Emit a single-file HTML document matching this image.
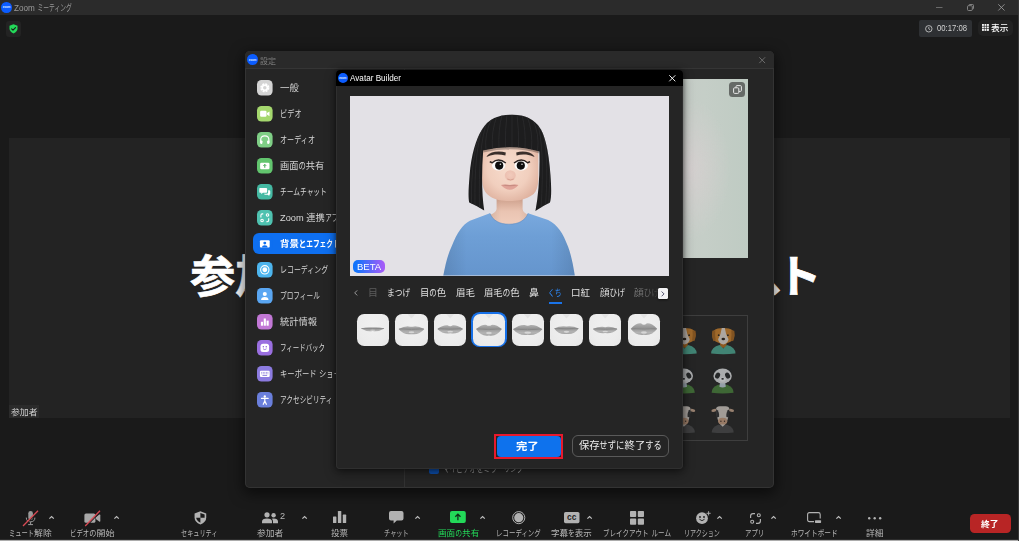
<!DOCTYPE html>
<html lang="ja">
<head>
<meta charset="utf-8">
<title>Zoom ミーティング</title>
<style>
html,body{margin:0;padding:0;}
body{width:1024px;height:541px;overflow:hidden;background:#1a1a1a;position:relative;font-family:"Liberation Sans","Noto Sans CJK JP",sans-serif;}
.abs,.t,svg{position:absolute;}
.t{white-space:pre;transform-origin:0 50%;display:block;}
.k{display:inline-block;vertical-align:baseline;white-space:pre;}
.k>span{display:inline-block;transform-origin:0 50%;white-space:pre;}
.k.h>span{transform:scaleX(0.8);}
.k.c>span{transform:scaleX(0.71);}
.layer{position:absolute;left:0;top:0;width:1024px;height:541px;}
svg{overflow:visible;}
</style>
</head>
<body>
<div class="layer" id="main">
<div class="abs" style="left:0.00px;top:0.00px;width:1024.00px;height:15.20px;background:#2b2b2b;"></div>
<div class="abs" style="left:1.20px;top:2.20px;width:10.60px;height:10.60px;border-radius:50%;background:#0b5cff;"></div>
<span class="t" style="left:1.20px;top:5.30px;font-size:3px;line-height:4px;color:#dfe8ff;font-weight:700;width:10.60px;text-align:center;letter-spacing:-0.1px">zoom</span>
<span class="t" style="left:13.64px;top:1.60px;font-size:9px;line-height:13px;color:#9a9a9a;transform:scaleX(0.9044);">Zoom <span class="k c" style="width:37.96px"><span>ミーティング</span></span></span>
<svg style="left:936.30px;top:6.80px;" width="6.50" height="1.00" viewBox="0 0 6.5 1"><rect width="6.5" height="1" fill="#6a6a6a"/></svg>
<svg style="left:967.00px;top:4.00px;" width="7.00" height="7.00" viewBox="0 0 7 7"><rect x="0.5" y="1.7" width="4.8" height="4.8" rx="1" fill="none" stroke="#8a8a8a" stroke-width="0.9"/><path d="M1.9 1.7 V1.3 Q1.9 0.5 2.7 0.5 H5.6 Q6.5 0.5 6.5 1.4 V4.2 Q6.5 5 5.8 5 H5.4" fill="none" stroke="#8a8a8a" stroke-width="0.9"/></svg>
<svg style="left:998.30px;top:4.20px;" width="6.80" height="6.80" viewBox="0 0 7 7"><path d="M0.3 0.3 L6.7 6.7 M6.7 0.3 L0.3 6.7" stroke="#9a9a9a" stroke-width="0.9" fill="none"/></svg>
<div class="abs" style="left:5.50px;top:21.00px;width:15.50px;height:15.50px;background:#232323;border-radius:3px;"></div>
<svg style="left:9.00px;top:24.00px;" width="9.00" height="9.60" viewBox="0 0 18 19"><path d="M9 0.5 L17 3.5 V9 Q17 15.5 9 18.7 Q1 15.5 1 9 V3.5 Z" fill="#23d959"/><path d="M5.2 9.5 L8 12.3 L13 7" fill="none" stroke="#1a1a1a" stroke-width="2.2" stroke-linecap="round" stroke-linejoin="round"/></svg>
<div class="abs" style="left:919.00px;top:19.60px;width:53.00px;height:17.30px;background:#2e3033;border-radius:2px;"></div>
<svg style="left:925.20px;top:24.70px;" width="7.60" height="7.60" viewBox="0 0 16 16"><circle cx="8" cy="8" r="6.8" fill="none" stroke="#d0d0d0" stroke-width="1.7"/><path d="M8 4.2 V8.3 L10.8 10" fill="none" stroke="#d0d0d0" stroke-width="1.6"/></svg>
<span class="t" style="left:936.95px;top:21.90px;font-size:9px;line-height:13px;color:#d2d2d2;transform:scaleX(0.8563);">00:17:08</span>
<div class="abs" style="left:977.50px;top:20.00px;width:35.40px;height:16.40px;background:#222222;border-radius:5px;"></div>
<svg style="left:982.10px;top:24.00px;" width="7.00" height="7.00" viewBox="0 0 7 7"><rect x="0.00" y="0.00" width="1.9" height="1.9" fill="#f2f2f2"/><rect x="2.50" y="0.00" width="1.9" height="1.9" fill="#f2f2f2"/><rect x="5.00" y="0.00" width="1.9" height="1.9" fill="#f2f2f2"/><rect x="0.00" y="2.50" width="1.9" height="1.9" fill="#f2f2f2"/><rect x="2.50" y="2.50" width="1.9" height="1.9" fill="#f2f2f2"/><rect x="5.00" y="2.50" width="1.9" height="1.9" fill="#f2f2f2"/><rect x="0.00" y="5.00" width="1.9" height="1.9" fill="#f2f2f2"/><rect x="2.50" y="5.00" width="1.9" height="1.9" fill="#f2f2f2"/><rect x="5.00" y="5.00" width="1.9" height="1.9" fill="#f2f2f2"/></svg>
<span class="t" style="left:991.17px;top:22.30px;font-size:8.5px;line-height:12px;color:#ffffff;transform:scaleX(1.0205);font-weight:500;">表示</span>
<div class="abs" style="left:8.50px;top:138.00px;width:1001.80px;height:280.20px;background:#232323;"></div>
<span class="t" style="left:190.20px;top:246.40px;font-size:45px;line-height:63px;color:#ffffff;transform:scaleX(1.0000);font-weight:700;-webkit-text-stroke:0.7px #fff;">参加者ビューの</span>
<span class="t" style="left:513.30px;top:246.40px;font-size:45px;line-height:63px;color:#ffffff;transform:scaleX(1.0000);font-weight:700;-webkit-text-stroke:0.7px #fff;">表示確認テス</span>
<span class="t" style="left:776.40px;top:246.40px;font-size:45px;line-height:63px;color:#ffffff;transform:scaleX(1.0000);font-weight:700;-webkit-text-stroke:0.7px #fff;">ト</span>
<div class="abs" style="left:773.60px;top:250.00px;width:13.40px;height:31.00px;background:#232323;"></div>
<div class="abs" style="left:8.90px;top:405.30px;width:29.90px;height:12.90px;background:#2b2b2b;"></div>
<span class="t" style="left:10.57px;top:406.00px;font-size:8.5px;line-height:12px;color:#d0d0d0;transform:scaleX(1.0411);">参加者</span>
<span class="t" style="left:8.97px;top:527.30px;font-size:8.5px;line-height:12px;color:#b6b6b6;transform:scaleX(1.0388);"><span class="k c" style="width:24.15px"><span>ミュート</span></span>解除</span>
<span class="t" style="left:70.17px;top:527.30px;font-size:8.5px;line-height:12px;color:#b6b6b6;transform:scaleX(1.0625);"><span class="k c" style="width:18.12px"><span>ビデオ</span></span><span class="k h" style="width:6.81px"><span>の</span></span>開始</span>
<span class="t" style="left:181.47px;top:527.30px;font-size:8.5px;line-height:12px;color:#b6b6b6;transform:scaleX(1.0198);"><span class="k c" style="width:35.85px"><span>セキュリティ</span></span></span>
<span class="t" style="left:256.87px;top:527.30px;font-size:8.5px;line-height:12px;color:#b6b6b6;transform:scaleX(1.0294);">参加者</span>
<span class="t" style="left:331.07px;top:527.30px;font-size:8.5px;line-height:12px;color:#b6b6b6;transform:scaleX(1.0029);">投票</span>
<span class="t" style="left:383.57px;top:527.30px;font-size:8.5px;line-height:12px;color:#b6b6b6;transform:scaleX(1.0283);"><span class="k c" style="width:24.08px"><span>チャット</span></span></span>
<span class="t" style="left:437.67px;top:527.30px;font-size:8.5px;line-height:12px;color:#23d959;transform:scaleX(1.0103);">画面<span class="k h" style="width:6.81px"><span>の</span></span>共有</span>
<span class="t" style="left:495.97px;top:527.30px;font-size:8.5px;line-height:12px;color:#b6b6b6;transform:scaleX(1.0703);"><span class="k c" style="width:41.82px"><span>レコーディング</span></span></span>
<span class="t" style="left:551.37px;top:527.30px;font-size:8.5px;line-height:12px;color:#b6b6b6;transform:scaleX(1.0005);">字幕<span class="k h" style="width:6.81px"><span>を</span></span>表示</span>
<span class="t" style="left:603.17px;top:527.30px;font-size:8.5px;line-height:12px;color:#b6b6b6;transform:scaleX(1.0789);"><span class="k c" style="width:42.13px"><span>ブレイクアウト</span></span> <span class="k c" style="width:17.93px"><span>ルーム</span></span></span>
<span class="t" style="left:683.87px;top:527.30px;font-size:8.5px;line-height:12px;color:#b6b6b6;transform:scaleX(0.9987);"><span class="k c" style="width:35.91px"><span>リアクション</span></span></span>
<span class="t" style="left:745.27px;top:527.30px;font-size:8.5px;line-height:12px;color:#b6b6b6;transform:scaleX(1.0579);"><span class="k c" style="width:18.12px"><span>アプリ</span></span></span>
<span class="t" style="left:790.67px;top:527.30px;font-size:8.5px;line-height:12px;color:#b6b6b6;transform:scaleX(1.1043);"><span class="k c" style="width:42.26px"><span>ホワイトボード</span></span></span>
<span class="t" style="left:865.87px;top:527.30px;font-size:8.5px;line-height:12px;color:#b6b6b6;transform:scaleX(1.0382);">詳細</span>
<span class="t" style="left:280.25px;top:510.10px;font-size:9px;line-height:13px;color:#b6b6b6;transform:scaleX(1.0188);">2</span>
<svg style="left:48.80px;top:516.20px;" width="5.20" height="2.80" viewBox="0 0 5.2 2.8"><path d="M0.4 2.6 L2.6 0.5 L4.8 2.6" fill="none" stroke="#c0c0c0" stroke-width="1.2"/></svg>
<svg style="left:114.00px;top:516.20px;" width="5.20" height="2.80" viewBox="0 0 5.2 2.8"><path d="M0.4 2.6 L2.6 0.5 L4.8 2.6" fill="none" stroke="#c0c0c0" stroke-width="1.2"/></svg>
<svg style="left:301.80px;top:516.20px;" width="5.20" height="2.80" viewBox="0 0 5.2 2.8"><path d="M0.4 2.6 L2.6 0.5 L4.8 2.6" fill="none" stroke="#c0c0c0" stroke-width="1.2"/></svg>
<svg style="left:414.60px;top:516.20px;" width="5.20" height="2.80" viewBox="0 0 5.2 2.8"><path d="M0.4 2.6 L2.6 0.5 L4.8 2.6" fill="none" stroke="#c0c0c0" stroke-width="1.2"/></svg>
<svg style="left:480.10px;top:516.20px;" width="5.20" height="2.80" viewBox="0 0 5.2 2.8"><path d="M0.4 2.6 L2.6 0.5 L4.8 2.6" fill="none" stroke="#c0c0c0" stroke-width="1.2"/></svg>
<svg style="left:587.40px;top:516.20px;" width="5.20" height="2.80" viewBox="0 0 5.2 2.8"><path d="M0.4 2.6 L2.6 0.5 L4.8 2.6" fill="none" stroke="#c0c0c0" stroke-width="1.2"/></svg>
<svg style="left:717.40px;top:516.20px;" width="5.20" height="2.80" viewBox="0 0 5.2 2.8"><path d="M0.4 2.6 L2.6 0.5 L4.8 2.6" fill="none" stroke="#c0c0c0" stroke-width="1.2"/></svg>
<svg style="left:771.30px;top:516.20px;" width="5.20" height="2.80" viewBox="0 0 5.2 2.8"><path d="M0.4 2.6 L2.6 0.5 L4.8 2.6" fill="none" stroke="#c0c0c0" stroke-width="1.2"/></svg>
<svg style="left:835.60px;top:516.20px;" width="5.20" height="2.80" viewBox="0 0 5.2 2.8"><path d="M0.4 2.6 L2.6 0.5 L4.8 2.6" fill="none" stroke="#c0c0c0" stroke-width="1.2"/></svg>
<svg style="left:22.00px;top:509.50px;" width="17.00" height="16.50" viewBox="0 0 17 16.5"><rect x="6.3" y="1" width="4.6" height="9" rx="2.3" fill="#9a9a9a"/><path d="M4.3 7.6 Q4.3 11.8 8.6 11.8 Q12.9 11.8 12.9 7.6" fill="none" stroke="#9a9a9a" stroke-width="1"/><path d="M8.6 11.8 V14.6 M6.2 14.6 H11" stroke="#9a9a9a" stroke-width="1" fill="none"/><path d="M1.6 16.6 L16.6 1.4" stroke="#1a1a1a" stroke-width="1.2"/><path d="M1 16 L16 0.8" stroke="#d84a54" stroke-width="1.3"/></svg>
<svg style="left:82.00px;top:509.50px;" width="20.00" height="16.50" viewBox="0 0 20 16.5"><rect x="2.4" y="3.4" width="11" height="9.4" rx="1.6" fill="#a8a8a8"/><path d="M13.9 7.2 L17.2 4.6 Q18.3 4 18.3 5.2 V11 Q18.3 12.2 17.2 11.6 L13.9 9 Z" fill="#a8a8a8"/><path d="M3.9 16.6 L18.7 1.4" stroke="#1a1a1a" stroke-width="1.2"/><path d="M3.2 16 L18 0.8" stroke="#d84a54" stroke-width="1.3"/></svg>
<svg style="left:193.60px;top:511.00px;" width="12.80" height="13.60" viewBox="0 0 12.5 13.4"><path d="M6.25 0.3 L12 2.4 V6.4 Q12 11 6.25 13.2 Q0.5 11 0.5 6.4 V2.4 Z" fill="#b2b2b2"/><path d="M6.25 1.9 V6.6 H10.4 V3.4 Z" fill="#1a1a1a"/><path d="M6.25 6.6 H2.1 Q2.5 9.8 6.25 11.5 Z" fill="#1a1a1a"/></svg>
<svg style="left:261.70px;top:512.20px;" width="16.00" height="11.20" viewBox="0 0 16 11.2"><circle cx="5" cy="2.8" r="2.6" fill="#b2b2b2"/><path d="M0 11.2 V9.6 Q0 6.4 5 6.4 Q10 6.4 10 9.6 V11.2 Z" fill="#b2b2b2"/><circle cx="11.6" cy="3.2" r="2.2" fill="#b2b2b2"/><path d="M11 11.2 V9.4 Q11 7.6 9.6 6.8 Q10.6 6.5 11.6 6.5 Q16 6.5 16 9.6 V11.2 Z" fill="#b2b2b2"/></svg>
<svg style="left:332.80px;top:511.40px;" width="13.20" height="12.00" viewBox="0 0 13.2 12"><rect x="0" y="5.4" width="3.4" height="6.6" rx="0.6" fill="#b2b2b2"/><rect x="4.9" y="0" width="3.4" height="12" rx="0.6" fill="#b2b2b2"/><rect x="9.8" y="3.6" width="3.4" height="8.4" rx="0.6" fill="#b2b2b2"/></svg>
<svg style="left:388.70px;top:511.40px;" width="14.50" height="12.60" viewBox="0 0 14.5 12.6"><path d="M2 0 H12.5 Q14.5 0 14.5 2 V7.4 Q14.5 9.4 12.5 9.4 H7.8 L4.6 12.4 V9.4 H2 Q0 9.4 0 7.4 V2 Q0 0 2 0 Z" fill="#b2b2b2"/></svg>
<svg style="left:450.40px;top:511.40px;" width="15.80" height="12.00" viewBox="0 0 15.8 12"><rect width="15.8" height="12" rx="2" fill="#23d959"/><path d="M7.9 9.2 V3.4 M5.3 5.8 L7.9 3.2 L10.5 5.8" stroke="#10301a" stroke-width="1.3" fill="none"/></svg>
<svg style="left:511.70px;top:510.90px;" width="13.50" height="13.30" viewBox="0 0 13.4 13.4"><circle cx="6.7" cy="6.7" r="6.1" fill="none" stroke="#b2b2b2" stroke-width="1"/><circle cx="6.7" cy="6.7" r="4.6" fill="#b2b2b2"/></svg>
<svg style="left:564.30px;top:512.20px;" width="15.50" height="11.20" viewBox="0 0 15.5 11.2"><rect width="15.5" height="11.2" rx="1.6" fill="#b2b2b2"/><text x="7.75" y="8.2" font-size="8.4" font-weight="700" text-anchor="middle" fill="#1f1f1f" font-family="Liberation Sans, sans-serif">cc</text></svg>
<svg style="left:629.80px;top:510.90px;" width="14.00" height="13.70" viewBox="0 0 14 13.7"><rect x="0" y="0" width="6.2" height="6.1" rx="0.8" fill="#b2b2b2"/><rect x="7.8" y="0" width="6.2" height="6.1" rx="0.8" fill="#b2b2b2"/><rect x="0" y="7.6" width="6.2" height="6.1" rx="0.8" fill="#b2b2b2"/><rect x="7.8" y="7.6" width="6.2" height="6.1" rx="0.8" fill="#b2b2b2"/></svg>
<svg style="left:695.80px;top:511.00px;" width="14.70" height="13.20" viewBox="0 0 14.7 13.2"><circle cx="6" cy="7.2" r="5.9" fill="#b2b2b2"/><circle cx="4" cy="6" r="0.9" fill="#1a1a1a"/><circle cx="8" cy="6" r="0.9" fill="#1a1a1a"/><path d="M3.4 8.2 Q6 11.2 8.6 8.2" fill="none" stroke="#1a1a1a" stroke-width="0.9"/><path d="M12.6 0.2 V4.4 M10.5 2.3 H14.7" stroke="#b2b2b2" stroke-width="0.9" fill="none"/></svg>
<svg style="left:749.60px;top:512.80px;" width="11.00" height="11.00" viewBox="0 0 11 11"><path d="M5 0.6 H3 Q0.6 0.6 0.6 3 V5" fill="none" stroke="#b2b2b2" stroke-width="1.15"/><path d="M6 10.4 H8 Q10.4 10.4 10.4 8 V6" fill="none" stroke="#b2b2b2" stroke-width="1.15"/><circle cx="8.8" cy="2.2" r="1.5" fill="none" stroke="#b2b2b2" stroke-width="1.1"/><circle cx="2.2" cy="8.8" r="1.5" fill="none" stroke="#b2b2b2" stroke-width="1.1"/></svg>
<svg style="left:806.90px;top:511.50px;" width="14.10" height="10.90" viewBox="0 0 14.1 10.9"><path d="M7 9.6 H2.4 Q0.6 9.6 0.6 7.8 V2.4 Q0.6 0.6 2.4 0.6 H11.4 Q13.2 0.6 13.2 2.4 V6.6" fill="none" stroke="#b2b2b2" stroke-width="1.1"/><rect x="8" y="8.2" width="6.1" height="2.7" rx="0.6" fill="#b2b2b2"/></svg>
<svg style="left:868.40px;top:516.60px;" width="13.40" height="2.40" viewBox="0 0 13.4 2.4"><circle cx="1.2" cy="1.2" r="1.2" fill="#b2b2b2"/><circle cx="6.7" cy="1.2" r="1.2" fill="#b2b2b2"/><circle cx="12.2" cy="1.2" r="1.2" fill="#b2b2b2"/></svg>
<div class="abs" style="left:970.00px;top:514.40px;width:40.90px;height:18.20px;background:#b82525;border-radius:4.5px;"></div>
<span class="t" style="left:981.27px;top:517.80px;font-size:8.5px;line-height:12px;color:#ffffff;transform:scaleX(1.0382);font-weight:700;">終了</span>
</div>
<div class="layer" id="settings-wrap">
<div class="abs" style="left:245px;top:51px;width:529px;height:437px;border-radius:5px;background:#252525;box-shadow:inset 0 0 0 1px #333333, 0 4px 14px 2px rgba(0,0,0,0.55);"></div>
<div class="layer" id="settings" style="clip-path:inset(51px 250px 53px 245px round 5px)">
<div class="abs" style="left:245.00px;top:51.00px;width:529.00px;height:18.00px;background:#2a2a2a;border-bottom:1px solid #353535;box-sizing:border-box;"></div>
<div class="abs" style="left:247.00px;top:54.20px;width:11.00px;height:11.00px;border-radius:50%;background:#0b5cff;"></div>
<span class="t" style="left:247.00px;top:57.50px;font-size:3px;line-height:4px;color:#dfe8ff;font-weight:700;width:11.00px;text-align:center;letter-spacing:-0.1px">zoom</span>
<span class="t" style="left:260.37px;top:54.50px;font-size:8.5px;line-height:12px;color:#7c7c7c;transform:scaleX(0.9383);">設定</span>
<svg style="left:758.80px;top:56.80px;" width="6.40" height="6.40" viewBox="0 0 7 7"><path d="M0.3 0.3 L6.7 6.7 M6.7 0.3 L0.3 6.7" stroke="#7a7a7a" stroke-width="0.9" fill="none"/></svg>
<div class="abs" style="left:403.80px;top:69.00px;width:1.00px;height:418.50px;background:#323232;"></div>
<div class="abs" style="left:253.40px;top:233.30px;width:166.60px;height:20.70px;background:#0e6ff0;border-radius:6px;"></div>
<svg style="left:256.70px;top:79.70px;" width="15.60" height="15.60" viewBox="0 0 16 16"><rect width="16" height="16" rx="4.6" fill="#d4d4d4"/><circle cx="8" cy="8" r="3.6" fill="none" stroke="#fff" stroke-width="2.2" stroke-dasharray="1.9 0.93"/><circle cx="8" cy="8" r="2.6" fill="none" stroke="#fff" stroke-width="1.6"/></svg>
<span class="t" style="left:280.44px;top:81.60px;font-size:9px;line-height:13px;color:#d8d8d8;transform:scaleX(1.0441);">一般</span>
<svg style="left:256.70px;top:105.70px;" width="15.60" height="15.60" viewBox="0 0 16 16"><rect width="16" height="16" rx="4.6" fill="#a5d86e"/><rect x="3.2" y="5" width="6.6" height="6" rx="1.2" fill="#fff"/><path d="M10.2 7.3 L12.8 5.6 V10.4 L10.2 8.7 Z" fill="#fff"/></svg>
<span class="t" style="left:280.14px;top:107.60px;font-size:9px;line-height:13px;color:#d8d8d8;transform:scaleX(1.1266);"><span class="k c" style="width:19.18px"><span>ビデオ</span></span></span>
<svg style="left:256.70px;top:131.70px;" width="15.60" height="15.60" viewBox="0 0 16 16"><rect width="16" height="16" rx="4.6" fill="#7fcf86"/><path d="M3.8 11.6 V8.2 Q3.8 4 8 4 Q12.2 4 12.2 8.2 V11.6" fill="none" stroke="#fff" stroke-width="1.2"/><rect x="3.4" y="8.6" width="2.2" height="3.6" rx="0.8" fill="#fff"/><rect x="10.4" y="8.6" width="2.2" height="3.6" rx="0.8" fill="#fff"/></svg>
<span class="t" style="left:280.14px;top:133.60px;font-size:9px;line-height:13px;color:#d8d8d8;transform:scaleX(1.1144);"><span class="k c" style="width:31.51px"><span>オーディオ</span></span></span>
<svg style="left:256.70px;top:157.70px;" width="15.60" height="15.60" viewBox="0 0 16 16"><rect width="16" height="16" rx="4.6" fill="#62c56e"/><rect x="3.2" y="4.8" width="9.6" height="6.8" rx="1.3" fill="#fff"/><path d="M8 10 V6.8 M6.6 8 L8 6.6 L9.4 8" stroke="#3aa34a" stroke-width="1" fill="none"/></svg>
<span class="t" style="left:280.34px;top:159.60px;font-size:9px;line-height:13px;color:#d8d8d8;transform:scaleX(1.0223);">画面<span class="k h" style="width:7.21px"><span>の</span></span>共有</span>
<svg style="left:256.70px;top:183.70px;" width="15.60" height="15.60" viewBox="0 0 16 16"><rect width="16" height="16" rx="4.6" fill="#45b9a3"/><path d="M3 4 H9.4 Q10.4 4 10.4 5 V8 Q10.4 9 9.4 9 H6 L4.4 10.6 V9 H3 Q2.4 9 2.4 8 V5 Q2.4 4 3 4Z" fill="#fff"/><path d="M11.4 6.4 H12.6 Q13.6 6.4 13.6 7.4 V10 Q13.6 11 12.6 11 V12.4 L11 11 H8.4 Q7.4 11 7.2 10 H10 Q11.4 10 11.4 8.6 Z" fill="#fff"/></svg>
<span class="t" style="left:280.34px;top:185.60px;font-size:9px;line-height:13px;color:#d8d8d8;transform:scaleX(1.0525);"><span class="k c" style="width:44.47px"><span>チームチャット</span></span></span>
<svg style="left:256.70px;top:209.70px;" width="15.60" height="15.60" viewBox="0 0 16 16"><rect width="16" height="16" rx="4.6" fill="#4fc2b0"/><path d="M6.4 4 H5.4 Q4 4 4 5.4 V7.6" fill="none" stroke="#fff" stroke-width="1.1"/><path d="M9.6 12 H10.6 Q12 12 12 10.6 V8.4" fill="none" stroke="#fff" stroke-width="1.1"/><circle cx="10.8" cy="5.2" r="1.3" fill="none" stroke="#fff" stroke-width="1.1"/><circle cx="5.2" cy="10.8" r="1.3" fill="none" stroke="#fff" stroke-width="1.1"/></svg>
<span class="t" style="left:280.34px;top:211.60px;font-size:9px;line-height:13px;color:#d8d8d8;transform:scaleX(1.0267);">Zoom 連携<span class="k c" style="width:19.18px"><span>アプリ</span></span></span>
<svg style="left:256.70px;top:235.70px;" width="15.60" height="15.60" viewBox="0 0 16 16"><rect width="16" height="16" rx="4.6" fill="#0e6ff0"/><rect x="3" y="4.4" width="10" height="7.4" rx="1" fill="#fff"/><circle cx="8" cy="7.3" r="1.5" fill="#0e6ff0"/><path d="M5.2 11.8 Q5.2 9.4 8 9.4 Q10.8 9.4 10.8 11.8 Z" fill="#0e6ff0"/></svg>
<span class="t" style="left:280.34px;top:237.60px;font-size:9px;line-height:13px;color:#ffffff;transform:scaleX(1.0475);font-weight:700;">背景<span class="k h" style="width:7.21px"><span>と</span></span><span class="k c" style="width:31.96px"><span>エフェクト</span></span></span>
<svg style="left:256.70px;top:261.70px;" width="15.60" height="15.60" viewBox="0 0 16 16"><rect width="16" height="16" rx="4.6" fill="#4db5ee"/><circle cx="8" cy="8" r="4.3" fill="none" stroke="#fff" stroke-width="1.1"/><circle cx="8" cy="8" r="2.5" fill="#fff"/></svg>
<span class="t" style="left:280.34px;top:263.60px;font-size:9px;line-height:13px;color:#d8d8d8;transform:scaleX(1.0863);"><span class="k c" style="width:44.29px"><span>レコーディング</span></span></span>
<svg style="left:256.70px;top:287.70px;" width="15.60" height="15.60" viewBox="0 0 16 16"><rect width="16" height="16" rx="4.6" fill="#5aa6f2"/><circle cx="8" cy="6.2" r="2.1" fill="#fff"/><path d="M4.2 12.2 Q4.2 9.2 8 9.2 Q11.8 9.2 11.8 12.2 Z" fill="#fff"/></svg>
<span class="t" style="left:280.34px;top:289.60px;font-size:9px;line-height:13px;color:#d8d8d8;transform:scaleX(1.0417);"><span class="k c" style="width:38.22px"><span>プロフィール</span></span></span>
<svg style="left:256.70px;top:313.70px;" width="15.60" height="15.60" viewBox="0 0 16 16"><rect width="16" height="16" rx="4.6" fill="#c278d6"/><rect x="4" y="8" width="2.2" height="4" fill="#fff"/><rect x="6.9" y="4.6" width="2.2" height="7.4" fill="#fff"/><rect x="9.8" y="6.8" width="2.2" height="5.2" fill="#fff"/></svg>
<span class="t" style="left:280.34px;top:315.60px;font-size:9px;line-height:13px;color:#d8d8d8;transform:scaleX(1.0276);">統計情報</span>
<svg style="left:256.70px;top:339.70px;" width="15.60" height="15.60" viewBox="0 0 16 16"><rect width="16" height="16" rx="4.6" fill="#9a6fe0"/><rect x="3.6" y="3.8" width="8.8" height="8.6" rx="2.6" fill="#fff"/><circle cx="6.5" cy="7" r="0.75" fill="#8a5fd6"/><circle cx="9.5" cy="7" r="0.75" fill="#8a5fd6"/><path d="M6.2 9 Q8 10.8 9.8 9" stroke="#8a5fd6" stroke-width="0.8" fill="none"/></svg>
<span class="t" style="left:280.34px;top:341.60px;font-size:9px;line-height:13px;color:#d8d8d8;transform:scaleX(1.0090);"><span class="k c" style="width:44.61px"><span>フィードバック</span></span></span>
<svg style="left:256.70px;top:365.70px;" width="15.60" height="15.60" viewBox="0 0 16 16"><rect width="16" height="16" rx="4.6" fill="#8c7be0"/><rect x="3" y="4.8" width="10" height="6.6" rx="1.1" fill="#fff"/><path d="M4.4 6.6 H11.6 M4.4 8 H11.6" stroke="#7a69d6" stroke-width="0.8" stroke-dasharray="0.9 0.7"/><path d="M5.6 9.7 H10.4" stroke="#7a69d6" stroke-width="0.8"/></svg>
<span class="t" style="left:280.34px;top:367.60px;font-size:9px;line-height:13px;color:#d8d8d8;transform:scaleX(1.1469);"><span class="k c" style="width:31.96px"><span>キーボード</span></span> <span class="k c" style="width:44.74px"><span>ショートカット</span></span></span>
<svg style="left:256.70px;top:391.70px;" width="15.60" height="15.60" viewBox="0 0 16 16"><rect width="16" height="16" rx="4.6" fill="#6a7fdc"/><circle cx="8" cy="4.6" r="1.2" fill="#fff"/><path d="M4.6 6.6 H11.4 M8 6.6 V9.4 M8 9.2 L6.4 12.6 M8 9.2 L9.6 12.6" stroke="#fff" stroke-width="1.3" fill="none" stroke-linecap="round"/></svg>
<span class="t" style="left:280.34px;top:393.60px;font-size:9px;line-height:13px;color:#d8d8d8;transform:scaleX(1.0414);"><span class="k c" style="width:50.42px"><span>アクセシビリティ</span></span></span>
<div class="abs" style="left:640.00px;top:78.60px;width:108.20px;height:179.70px;background:radial-gradient(ellipse 40px 70px at 50px 90px,rgba(214,208,208,.9),rgba(214,208,208,0)),linear-gradient(90deg,#c8cbc8 0%,#c5cec7 60%,#bfcbc3 100%);"></div>
<div class="abs" style="left:729.40px;top:81.70px;width:15.80px;height:15.80px;background:#666a67;border-radius:3.5px;"></div>
<svg style="left:732.80px;top:85.10px;" width="9.00" height="9.00" viewBox="0 0 9 9"><rect x="0.6" y="2.8" width="5.2" height="5.6" rx="1" fill="none" stroke="#e8e8e8" stroke-width="1"/><path d="M3 2.6 V1.6 Q3 0.6 4 0.6 H7.4 Q8.4 0.6 8.4 1.6 V5.4 Q8.4 6.4 7.4 6.4 H6" fill="none" stroke="#e8e8e8" stroke-width="1"/></svg>
<div class="abs" style="left:600.00px;top:314.70px;width:147.80px;height:126.80px;border:1px solid #3e3e3e;box-sizing:border-box;"></div>
<svg style="left:0;top:0;opacity:0.78;filter:blur(0.3px)" width="1024" height="541" viewBox="0 0 1024 541"><rect x="681.3" y="341.8" width="6.4" height="6" fill="#a9681f"/><path d="M672.3 353.6 Q672.3 347.2 680.9 345.0 L684.5 348.4 L688.1 345.0 Q696.7 347.2 696.7 353.6 Q684.5 355.0 672.3 353.6 Z" fill="#4a9f8b"/><path d="M673.5 335.8 Q673.1 329.8 679.0 328.4 Q684.5 327.4 690.0 328.4 Q695.9 329.8 695.5 335.8 Q695.1 340.8 690.5 342.2 Q684.5 345.2 678.5 342.2 Q673.9 340.8 673.5 335.8 Z" fill="#c07c2c"/><path d="M673.5 330.8 Q672.5 336.8 674.7 341.2 L676.9 340.4 Q675.9 334.8 676.5 330.2 Z" fill="#9c6020"/><path d="M695.5 330.8 Q696.5 336.8 694.3 341.2 L692.1 340.4 Q693.1 334.8 692.5 330.2 Z" fill="#9c6020"/><path d="M683.0 328.0 Q682.1 334.8 679.3 339.2 Q679.7 343.2 684.5 344.4 Q689.3 343.2 689.7 339.2 Q686.9 334.8 686.0 328.0 Z" fill="#d2cbc3"/><ellipse cx="684.5" cy="339.0" rx="1.8" ry="1.2" fill="#2a221c"/><circle cx="679.9" cy="335.2" r="0.9" fill="#2a221c"/><circle cx="689.1" cy="335.2" r="0.9" fill="#2a221c"/><path d="M672.8 392.8 Q672.8 387.4 679.2 384.8 L688.4 384.8 Q694.8 387.4 694.8 392.8 Q683.8 394.0 672.8 392.8 Z" fill="#467a3a"/><path d="M681.2 382.0 H686.4 L687.0 386.8 Q683.8 388.4 680.6 386.8 Z" fill="#b4c2cc"/><circle cx="676.8" cy="370.6" r="2.5" fill="#232527"/><circle cx="690.8" cy="370.6" r="2.5" fill="#232527"/><ellipse cx="683.8" cy="376.0" rx="9.2" ry="7.4" fill="#d0d2d4"/><ellipse cx="678.8" cy="375.6" rx="2.3" ry="3.1" fill="#26282a" transform="rotate(28 678.8 375.6)"/><ellipse cx="688.8" cy="375.6" rx="2.3" ry="3.1" fill="#26282a" transform="rotate(-28 688.8 375.6)"/><ellipse cx="683.8" cy="379.6" rx="3" ry="2.2" fill="#e2e4e6"/><ellipse cx="683.8" cy="378.8" rx="1.3" ry="0.9" fill="#26282a"/><path d="M672.9 432.4 Q672.9 427.4 679.3 424.8 L688.5 424.8 Q694.9 427.4 694.9 432.4 Q683.9 433.4 672.9 432.4 Z" fill="#454647"/><ellipse cx="675.3" cy="410.4" rx="2.8" ry="1.5" fill="#b89a84" transform="rotate(-12 675.3 410.4)"/><ellipse cx="692.5" cy="410.4" rx="2.8" ry="1.5" fill="#b89a84" transform="rotate(12 692.5 410.4)"/><path d="M677.3 408.8 Q677.5 406.2 680.9 406.2 L686.9 406.2 Q690.3 406.2 690.5 408.8 Q690.1 422.8 683.9 426.8 Q677.7 422.8 677.3 408.8 Z" fill="#c4beb8"/><path d="M677.3 409.2 Q680.7 410.8 680.3 416.8 L677.4 417.8 Z" fill="#2f3032"/><path d="M690.5 409.2 Q687.1 410.8 687.5 416.8 L690.4 417.8 Z" fill="#2f3032"/><ellipse cx="683.9" cy="421.2" rx="4.6" ry="3.4" fill="#b79278"/><circle cx="682.1" cy="421.2" r="0.7" fill="#3a2c24"/><circle cx="685.7" cy="421.2" r="0.7" fill="#3a2c24"/><rect x="720.1" y="341.8" width="6.4" height="6" fill="#a9681f"/><path d="M711.1 353.6 Q711.1 347.2 719.7 345.0 L723.3 348.4 L726.9 345.0 Q735.5 347.2 735.5 353.6 Q723.3 355.0 711.1 353.6 Z" fill="#4a9f8b"/><path d="M712.3 335.8 Q711.9 329.8 717.8 328.4 Q723.3 327.4 728.8 328.4 Q734.7 329.8 734.3 335.8 Q733.9 340.8 729.3 342.2 Q723.3 345.2 717.3 342.2 Q712.7 340.8 712.3 335.8 Z" fill="#c07c2c"/><path d="M712.3 330.8 Q711.3 336.8 713.5 341.2 L715.7 340.4 Q714.7 334.8 715.3 330.2 Z" fill="#9c6020"/><path d="M734.3 330.8 Q735.3 336.8 733.1 341.2 L730.9 340.4 Q731.9 334.8 731.3 330.2 Z" fill="#9c6020"/><path d="M721.8 328.0 Q720.9 334.8 718.1 339.2 Q718.5 343.2 723.3 344.4 Q728.1 343.2 728.5 339.2 Q725.7 334.8 724.8 328.0 Z" fill="#d2cbc3"/><ellipse cx="723.3" cy="339.0" rx="1.8" ry="1.2" fill="#2a221c"/><circle cx="718.7" cy="335.2" r="0.9" fill="#2a221c"/><circle cx="727.9" cy="335.2" r="0.9" fill="#2a221c"/><path d="M711.6 392.8 Q711.6 387.4 718.0 384.8 L727.2 384.8 Q733.6 387.4 733.6 392.8 Q722.6 394.0 711.6 392.8 Z" fill="#467a3a"/><path d="M720.0 382.0 H725.2 L725.8 386.8 Q722.6 388.4 719.4 386.8 Z" fill="#b4c2cc"/><circle cx="715.6" cy="370.6" r="2.5" fill="#232527"/><circle cx="729.6" cy="370.6" r="2.5" fill="#232527"/><ellipse cx="722.6" cy="376.0" rx="9.2" ry="7.4" fill="#d0d2d4"/><ellipse cx="717.6" cy="375.6" rx="2.3" ry="3.1" fill="#26282a" transform="rotate(28 717.6 375.6)"/><ellipse cx="727.6" cy="375.6" rx="2.3" ry="3.1" fill="#26282a" transform="rotate(-28 727.6 375.6)"/><ellipse cx="722.6" cy="379.6" rx="3" ry="2.2" fill="#e2e4e6"/><ellipse cx="722.6" cy="378.8" rx="1.3" ry="0.9" fill="#26282a"/><path d="M711.7 432.4 Q711.7 427.4 718.1 424.8 L727.3 424.8 Q733.7 427.4 733.7 432.4 Q722.7 433.4 711.7 432.4 Z" fill="#454647"/><ellipse cx="714.1" cy="410.4" rx="2.8" ry="1.5" fill="#b89a84" transform="rotate(-12 714.1 410.4)"/><ellipse cx="731.3" cy="410.4" rx="2.8" ry="1.5" fill="#b89a84" transform="rotate(12 731.3 410.4)"/><path d="M716.1 408.8 Q716.3 406.2 719.7 406.2 L725.7 406.2 Q729.1 406.2 729.3 408.8 Q728.9 422.8 722.7 426.8 Q716.5 422.8 716.1 408.8 Z" fill="#c4beb8"/><path d="M716.1 409.2 Q719.5 410.8 719.1 416.8 L716.2 417.8 Z" fill="#2f3032"/><path d="M729.3 409.2 Q725.9 410.8 726.3 416.8 L729.2 417.8 Z" fill="#2f3032"/><ellipse cx="722.7" cy="421.2" rx="4.6" ry="3.4" fill="#b79278"/><circle cx="720.9" cy="421.2" r="0.7" fill="#3a2c24"/><circle cx="724.5" cy="421.2" r="0.7" fill="#3a2c24"/></svg>
<div class="abs" style="left:429.40px;top:464.00px;width:9.60px;height:9.70px;background:#0d4fae;border-radius:2px;"></div>
<span class="t" style="left:442.84px;top:462.50px;font-size:9px;line-height:13px;color:#a2a2a2;transform:scaleX(1.0398);"><span class="k c" style="width:31.96px"><span>マイビデオ</span></span><span class="k h" style="width:7.21px"><span>を</span></span><span class="k c" style="width:38.35px"><span>ミラーリング</span></span></span>
</div>
</div>
<div class="layer" id="avatar-wrap">
<div class="abs" style="left:336px;top:70px;width:347px;height:399px;border-radius:4px;background:#252525;box-shadow:inset 0 0 0 1px #2f2f2f, 0 0 5px rgba(0,0,0,0.5), 0 4px 12px rgba(0,0,0,0.4);"></div>
<div class="layer" id="avatar" style="clip-path:inset(70px 341px 72px 336px round 4px)">
<div class="abs" style="left:336.00px;top:70.00px;width:347.00px;height:16.00px;background:#000000;"></div>
<div class="abs" style="left:337.50px;top:72.80px;width:10.40px;height:10.40px;border-radius:50%;background:#0b5cff;"></div>
<span class="t" style="left:337.50px;top:75.80px;font-size:3px;line-height:4px;color:#dfe8ff;font-weight:700;width:10.40px;text-align:center;letter-spacing:-0.1px">zoom</span>
<span class="t" style="left:350.05px;top:71.70px;font-size:9px;line-height:13px;color:#ffffff;transform:scaleX(0.9048);">Avatar Builder</span>
<svg style="left:668.70px;top:74.70px;" width="6.60" height="6.60" viewBox="0 0 7 7"><path d="M0.3 0.3 L6.7 6.7 M6.7 0.3 L0.3 6.7" stroke="#ffffff" stroke-width="1" fill="none"/></svg>
<div class="abs" style="left:350.20px;top:96.40px;width:318.50px;height:179.20px;background:#e3e1e6;"></div>
<svg style="left:0;top:0" width="1024" height="541" viewBox="0 0 1024 541">
<defs>
<radialGradient id="gface" cx="0.47" cy="0.45" r="0.62"><stop offset="0" stop-color="#f7dccd"/><stop offset="0.6" stop-color="#f1cfbe"/><stop offset="1" stop-color="#deb09d"/></radialGradient>
<linearGradient id="gneck" x1="0" y1="0" x2="0" y2="1"><stop offset="0.2" stop-color="#cfa28e"/><stop offset="0.55" stop-color="#eac4b2"/><stop offset="1" stop-color="#f1cfbe"/></linearGradient>
<linearGradient id="gneckx" x1="0" y1="0" x2="1" y2="0"><stop offset="0" stop-color="#000" stop-opacity="0.10"/><stop offset="0.3" stop-color="#000" stop-opacity="0"/><stop offset="0.75" stop-color="#000" stop-opacity="0"/><stop offset="1" stop-color="#000" stop-opacity="0.08"/></linearGradient>
<linearGradient id="gsw" x1="0" y1="0" x2="0" y2="1"><stop offset="0" stop-color="#79a9de"/><stop offset="0.35" stop-color="#6e9fd6"/><stop offset="1" stop-color="#6595cd"/></linearGradient>
<linearGradient id="gswx" x1="0" y1="0" x2="1" y2="0"><stop offset="0" stop-color="#000" stop-opacity="0.10"/><stop offset="0.18" stop-color="#000" stop-opacity="0"/><stop offset="0.82" stop-color="#000" stop-opacity="0"/><stop offset="1" stop-color="#000" stop-opacity="0.10"/></linearGradient>
<linearGradient id="ghair" x1="0" y1="0" x2="1" y2="0"><stop offset="0" stop-color="#262628"/><stop offset="0.25" stop-color="#1b1b1c"/><stop offset="0.5" stop-color="#2a2a2c"/><stop offset="0.75" stop-color="#1b1b1c"/><stop offset="1" stop-color="#262628"/></linearGradient>
<radialGradient id="gnose" cx="0.5" cy="0.45" r="0.6"><stop offset="0" stop-color="#efc3b4"/><stop offset="0.7" stop-color="#e8b5a6"/><stop offset="1" stop-color="#efc8b9" stop-opacity="0"/></radialGradient>
<clipPath id="chair"><path id="phair" d="M512 114.8 C500 114.6 489 118 482 129.5 C476 139 471.2 155 469.6 175 C468.6 188 468 197 469.2 202.6 Q476 205.5 484.2 210.6 Q480.6 186 483.2 150.6 Q512 143.2 539.4 151.6 Q540.2 186 535.4 211 Q543 206 550 202.6 C551.6 197 551.4 188 550.5 175 C549 155 546 139 541 129.5 C534 118 524 114.6 512 114.8 Z"/></clipPath>
</defs>
<g>
<path d="M496.6 192 V209 Q496 213 489 215 V227 H529 V215 Q523 213 522.6 209 V192 Z" fill="url(#gneck)"/>
<path d="M496.6 192 V209 Q496 213 489 215 V227 H529 V215 Q523 213 522.6 209 V192 Z" fill="url(#gneckx)"/>
<path d="M482 140 L482 180 C482.3 186 484 191 487 194 C490 197 494 199 498.5 199.9 C502 200.6 506 200.9 509.5 200.9 C513 200.9 517 200.6 520.7 199.9 C525 199 530 197 533.6 194 C536.6 191 538 186 538.3 180 L538.3 140 Z" fill="url(#gface)"/>
<path d="M443.3 275.6 C445.5 264 448 254 451.6 246.5 C454.5 239 457 234 460 229.9 C463 225.5 466 223 469.9 220.8 L489.9 213.3 C493 221 500 224.2 509 224.2 C518 224.2 525 221 528.1 213.3 L548.1 219.9 C553 222.5 556.5 225.5 559.7 229.9 C563 234.5 565.5 240 568 246.5 C571 254.5 573 264 574.8 275.6 Z" fill="url(#gsw)"/>
<path d="M443.3 275.6 C445.5 264 448 254 451.6 246.5 C454.5 239 457 234 460 229.9 C463 225.5 466 223 469.9 220.8 L489.9 213.3 C493 221 500 224.2 509 224.2 C518 224.2 525 221 528.1 213.3 L548.1 219.9 C553 222.5 556.5 225.5 559.7 229.9 C563 234.5 565.5 240 568 246.5 C571 254.5 573 264 574.8 275.6 Z" fill="url(#gswx)"/>
<path d="M489.9 213.3 C493 221 500 224.2 509 224.2 C518 224.2 525 221 528.1 213.3" fill="none" stroke="#5b8ac2" stroke-width="0.8" opacity="0.7"/>
<use href="#phair" fill="#1d1d1e"/>
<g clip-path="url(#chair)" stroke="#343437" stroke-width="0.9" fill="none" opacity="0.6">
<path d="M512 114 L512 147"/><path d="M507 114 Q505 130 505.5 147.5"/><path d="M517 114 Q519 130 518.5 147.5"/>
<path d="M502 115 Q498 130 499 148.5"/><path d="M522 115 Q526 130 525 148.5"/>
<path d="M497 116 Q491 131 492.5 149.5"/><path d="M527 116 Q533 131 531.5 149.5"/>
<path d="M492 118 Q484 134 486 150.5"/><path d="M532 118 Q540 134 537.5 151"/>
<path d="M487 122 Q478 145 479.5 209"/><path d="M537 122 Q545 145 541 209"/>
<path d="M483 127 Q474 150 475 206"/><path d="M541 127 Q549.5 150 545.5 206"/>
<path d="M479.5 134 Q470.5 160 471.5 204"/><path d="M544 134 Q552 160 548.6 204"/>
</g>
<path d="M483.4 150.6 Q512 143.2 539.4 151.6 L539.4 153.4 Q512 145.4 483.4 152.6 Z" fill="#000" opacity="0.28"/>
<path d="M486.4 157 Q488 153 495 151.8 Q501 151 505.8 152.6 L505.4 155.6 Q500 154 495 154.6 Q490 155.4 486.4 157 Z" fill="#3a2f2b"/>
<path d="M534.6 157 Q533 153 526 151.8 Q521 151 516.2 152.6 L516.6 155.6 Q521 154 526 154.6 Q531 155.4 534.6 157 Z" fill="#3a2f2b"/>
<ellipse cx="498.6" cy="165.4" rx="6.6" ry="5.2" fill="#fbfbfb"/><ellipse cx="521.2" cy="165.4" rx="6.6" ry="5.2" fill="#fbfbfb"/>
<circle cx="499.2" cy="165.6" r="4.1" fill="#0e0e0f"/><circle cx="520.8" cy="165.6" r="4.1" fill="#0e0e0f"/>
<circle cx="500.4" cy="164.3" r="0.8" fill="#fff" opacity="0.85"/><circle cx="522" cy="164.3" r="0.8" fill="#fff" opacity="0.85"/>
<path d="M489.8 161.6 Q491 162.4 492.2 162.7 Q498.5 157.2 505.8 163" fill="none" stroke="#2a2221" stroke-width="1.4"/>
<path d="M530 161.6 Q528.8 162.4 527.6 162.7 Q521.3 157.2 514 163" fill="none" stroke="#2a2221" stroke-width="1.4"/>
<ellipse cx="510.3" cy="175.8" rx="5.8" ry="5.6" fill="url(#gnose)" opacity="0.65"/>
<path d="M507.2 179 Q510.5 181 513.8 179" stroke="#c98f80" stroke-width="0.8" fill="none" opacity="0.8"/>
<path d="M501 185 Q505.5 184.2 509.8 185 Q514.2 184.2 518.5 185 Q514.5 189.8 509.8 189.8 Q505.2 189.8 501 185 Z" fill="#e0a398"/>
<path d="M501 184.9 Q505.5 184.3 509.8 185.1 Q514.2 184.3 518.5 184.9 Q509.8 187.6 501 184.9 Z" fill="#c88c82"/>
</g></svg>
<div class="abs" style="left:352.60px;top:259.80px;width:32.60px;height:13.50px;background:linear-gradient(90deg,#1274fb 10%,#a45cf8 95%);border-radius:5px;"></div>
<span class="t" style="left:356.62px;top:260.20px;font-size:9.6px;line-height:13px;color:#ffffff;transform:scaleX(0.9920);">BETA</span>
<svg style="left:353.60px;top:290.40px;" width="3.60" height="5.80" viewBox="0 0 3.6 5.8"><path d="M3.2 0.4 L0.7 2.9 L3.2 5.4" fill="none" stroke="#9a9a9a" stroke-width="1"/></svg>
<span class="t" style="left:368.44px;top:287.20px;font-size:9px;line-height:13px;color:#5e5e5e;transform:scaleX(1.0992);">目</span>
<span class="t" style="left:387.25px;top:287.20px;font-size:9px;line-height:13px;color:#e2e2e2;transform:scaleX(1.0785);"><span class="k h" style="width:21.61px"><span>まつげ</span></span></span>
<span class="t" style="left:419.75px;top:287.20px;font-size:9px;line-height:13px;color:#e2e2e2;transform:scaleX(1.0343);">目<span class="k h" style="width:7.21px"><span>の</span></span>色</span>
<span class="t" style="left:455.64px;top:287.20px;font-size:9px;line-height:13px;color:#e2e2e2;transform:scaleX(1.0496);">眉毛</span>
<span class="t" style="left:484.05px;top:287.20px;font-size:9px;line-height:13px;color:#e2e2e2;transform:scaleX(1.0370);">眉毛<span class="k h" style="width:7.21px"><span>の</span></span>色</span>
<span class="t" style="left:529.45px;top:287.20px;font-size:9px;line-height:13px;color:#e2e2e2;transform:scaleX(1.1214);">鼻</span>
<span class="t" style="left:548.45px;top:287.20px;font-size:9px;line-height:13px;color:#2d8cff;transform:scaleX(0.9443);"><span class="k h" style="width:14.41px"><span>くち</span></span></span>
<div class="abs" style="left:549.20px;top:302.20px;width:12.40px;height:1.40px;background:#1a73e8;"></div>
<span class="t" style="left:571.15px;top:287.20px;font-size:9px;line-height:13px;color:#e2e2e2;transform:scaleX(1.0496);">口紅</span>
<span class="t" style="left:599.85px;top:287.20px;font-size:9px;line-height:13px;color:#e2e2e2;transform:scaleX(1.0675);">顔<span class="k h" style="width:14.41px"><span>ひげ</span></span></span>
<span class="t" style="left:634.25px;top:287.20px;font-size:9px;line-height:13px;color:#a0a0a0;transform:scaleX(1.0846);-webkit-mask-image:linear-gradient(90deg,rgba(0,0,0,.8) 0,rgba(0,0,0,.45) 14px,rgba(0,0,0,.15) 22px,transparent 28px);mask-image:linear-gradient(90deg,rgba(0,0,0,.8) 0,rgba(0,0,0,.45) 14px,rgba(0,0,0,.15) 22px,transparent 28px);">顔<span class="k h" style="width:21.61px"><span>ひげの</span></span>色</span>
<div class="abs" style="left:658.10px;top:287.90px;width:10.20px;height:10.70px;background:#f2f2f4;border-radius:1.5px;box-shadow:0 0.5px 2px rgba(0,0,0,.6);"></div>
<svg style="left:661.20px;top:290.80px;" width="3.60" height="5.80" viewBox="0 0 3.6 5.8"><path d="M0.6 0.5 L3 2.9 L0.6 5.3" fill="none" stroke="#4a4a66" stroke-width="0.95"/></svg>
<svg style="left:0;top:0" width="0" height="0"><defs><filter id="bl" x="-20%" y="-50%" width="140%" height="200%"><feGaussianBlur stdDeviation="0.45"/></filter><linearGradient id="gup" x1="0" y1="0" x2="0" y2="1"><stop offset="0" stop-color="#b2b2b2"/><stop offset="1" stop-color="#8c8c8c"/></linearGradient><linearGradient id="glo" x1="0" y1="0" x2="0" y2="1"><stop offset="0" stop-color="#989898"/><stop offset="0.6" stop-color="#b4b4b4"/><stop offset="1" stop-color="#a4a4a4"/></linearGradient></defs></svg>
<div class="abs" style="left:356.60px;top:313.60px;width:32.20px;height:32.30px;background:radial-gradient(ellipse at 50% 35%,#f0f0f0 0%,#ececec 60%,#e7e7e7 100%);border-radius:7.2px;"></div>
<svg style="left:0;top:0" width="1024" height="541" viewBox="0 0 1024 541"><g filter="url(#bl)"><path d="M361.00 328.50 Q372.70 329.50 384.40 328.50 Q379.72 331.67 372.70 331.10 Q365.68 331.67 361.00 328.50 Z" fill="url(#glo)"/><path d="M361.00 328.50 Q366.27 327.00 370.36 327.20 Q372.70 327.20 375.04 327.20 Q379.14 327.00 384.40 328.50 Q372.70 329.50 361.00 328.50 Z" fill="url(#gup)"/><path d="M361.50 328.50 Q372.70 329.50 383.90 328.50" stroke="#7c7c7c" stroke-width="0.7" fill="none"/><ellipse cx="372.70" cy="330.11" rx="2.57" ry="0.52" fill="#ffffff" opacity="0.45"/></g></svg>
<div class="abs" style="left:395.35px;top:313.60px;width:32.20px;height:32.30px;background:radial-gradient(ellipse at 50% 35%,#f0f0f0 0%,#ececec 60%,#e7e7e7 100%);border-radius:7.2px;"></div>
<svg style="left:0;top:0" width="1024" height="541" viewBox="0 0 1024 541"><path d="M407.45 314 L411.45 318.6 L415.45 314 Z" fill="#dedede" opacity="0.7" filter="url(#bl)"/><g filter="url(#bl)"><path d="M398.55 329.00 Q411.45 330.00 424.35 329.00 Q419.19 335.34 411.45 334.20 Q403.71 335.34 398.55 329.00 Z" fill="url(#glo)"/><path d="M398.55 329.00 Q404.36 326.01 408.87 326.40 Q411.45 326.88 414.03 326.40 Q418.55 326.01 424.35 329.00 Q411.45 330.00 398.55 329.00 Z" fill="url(#gup)"/><path d="M399.05 329.00 Q411.45 330.00 423.85 329.00" stroke="#7c7c7c" stroke-width="0.7" fill="none"/><ellipse cx="411.45" cy="332.22" rx="2.84" ry="1.04" fill="#ffffff" opacity="0.45"/></g></svg>
<div class="abs" style="left:434.10px;top:313.60px;width:32.20px;height:32.30px;background:radial-gradient(ellipse at 50% 35%,#f0f0f0 0%,#ececec 60%,#e7e7e7 100%);border-radius:7.2px;"></div>
<svg style="left:0;top:0" width="1024" height="541" viewBox="0 0 1024 541"><path d="M446.20 314 L450.20 318.6 L454.20 314 Z" fill="#dedede" opacity="0.7" filter="url(#bl)"/><g filter="url(#bl)"><path d="M437.40 328.90 Q450.20 329.90 463.00 328.90 Q457.88 334.27 450.20 333.30 Q442.52 334.27 437.40 328.90 Z" fill="url(#glo)"/><path d="M437.40 328.90 Q443.16 324.76 447.64 325.30 Q450.20 327.22 452.76 325.30 Q457.24 324.76 463.00 328.90 Q450.20 329.90 437.40 328.90 Z" fill="url(#gup)"/><path d="M437.90 328.90 Q450.20 329.90 462.50 328.90" stroke="#7c7c7c" stroke-width="0.7" fill="none"/><ellipse cx="450.20" cy="331.63" rx="2.82" ry="0.88" fill="#ffffff" opacity="0.45"/></g></svg>
<div class="abs" style="left:471.25px;top:312.00px;width:35.40px;height:35.30px;background:#1670e8;border-radius:8.6px;"></div>
<div class="abs" style="left:472.85px;top:313.60px;width:32.20px;height:32.30px;background:radial-gradient(ellipse at 50% 35%,#f0f0f0 0%,#ececec 60%,#e7e7e7 100%);border-radius:7.2px;"></div>
<svg style="left:0;top:0" width="1024" height="541" viewBox="0 0 1024 541"><path d="M484.95 314 L488.95 318.6 L492.95 314 Z" fill="#dedede" opacity="0.7" filter="url(#bl)"/><g filter="url(#bl)"><path d="M476.05 329.10 Q488.95 330.10 501.85 329.10 Q496.69 336.91 488.95 335.50 Q481.21 336.91 476.05 329.10 Z" fill="url(#glo)"/><path d="M476.05 329.10 Q481.86 324.27 486.37 324.90 Q488.95 326.82 491.53 324.90 Q496.05 324.27 501.85 329.10 Q488.95 330.10 476.05 329.10 Z" fill="url(#gup)"/><path d="M476.55 329.10 Q488.95 330.10 501.35 329.10" stroke="#7c7c7c" stroke-width="0.7" fill="none"/><ellipse cx="488.95" cy="333.07" rx="2.84" ry="1.28" fill="#ffffff" opacity="0.45"/></g></svg>
<div class="abs" style="left:511.60px;top:313.60px;width:32.20px;height:32.30px;background:radial-gradient(ellipse at 50% 35%,#f0f0f0 0%,#ececec 60%,#e7e7e7 100%);border-radius:7.2px;"></div>
<svg style="left:0;top:0" width="1024" height="541" viewBox="0 0 1024 541"><path d="M523.70 314 L527.70 318.6 L531.70 314 Z" fill="#dedede" opacity="0.7" filter="url(#bl)"/><g filter="url(#bl)"><path d="M513.00 329.20 Q527.70 330.20 542.40 329.20 Q536.52 336.03 527.70 334.80 Q518.88 336.03 513.00 329.20 Z" fill="url(#glo)"/><path d="M513.00 329.20 Q519.62 324.37 524.76 325.00 Q527.70 326.28 530.64 325.00 Q535.79 324.37 542.40 329.20 Q527.70 330.20 513.00 329.20 Z" fill="url(#gup)"/><path d="M513.50 329.20 Q527.70 330.20 541.90 329.20" stroke="#7c7c7c" stroke-width="0.7" fill="none"/><ellipse cx="527.70" cy="332.67" rx="3.23" ry="1.12" fill="#ffffff" opacity="0.45"/></g></svg>
<div class="abs" style="left:550.35px;top:313.60px;width:32.20px;height:32.30px;background:radial-gradient(ellipse at 50% 35%,#f0f0f0 0%,#ececec 60%,#e7e7e7 100%);border-radius:7.2px;"></div>
<svg style="left:0;top:0" width="1024" height="541" viewBox="0 0 1024 541"><path d="M562.45 314 L566.45 318.6 L570.45 314 Z" fill="#dedede" opacity="0.7" filter="url(#bl)"/><g filter="url(#bl)"><path d="M554.15 328.50 Q566.45 329.50 578.75 328.50 Q573.83 335.09 566.45 333.90 Q559.07 335.09 554.15 328.50 Z" fill="url(#glo)"/><path d="M554.15 328.50 Q559.69 325.97 563.99 326.30 Q566.45 326.62 568.91 326.30 Q573.22 325.97 578.75 328.50 Q566.45 329.50 554.15 328.50 Z" fill="url(#gup)"/><path d="M554.65 328.50 Q566.45 329.50 578.25 328.50" stroke="#7c7c7c" stroke-width="0.7" fill="none"/><ellipse cx="566.45" cy="331.85" rx="2.71" ry="1.08" fill="#ffffff" opacity="0.45"/></g></svg>
<div class="abs" style="left:589.10px;top:313.60px;width:32.20px;height:32.30px;background:radial-gradient(ellipse at 50% 35%,#f0f0f0 0%,#ececec 60%,#e7e7e7 100%);border-radius:7.2px;"></div>
<svg style="left:0;top:0" width="1024" height="541" viewBox="0 0 1024 541"><path d="M601.20 314 L605.20 318.6 L609.20 314 Z" fill="#dedede" opacity="0.7" filter="url(#bl)"/><g filter="url(#bl)"><path d="M592.90 328.90 Q605.20 329.90 617.50 328.90 Q612.58 334.02 605.20 333.10 Q597.82 334.02 592.90 328.90 Z" fill="url(#glo)"/><path d="M592.90 328.90 Q598.44 326.37 602.74 326.70 Q605.20 327.66 607.66 326.70 Q611.97 326.37 617.50 328.90 Q605.20 329.90 592.90 328.90 Z" fill="url(#gup)"/><path d="M593.40 328.90 Q605.20 329.90 617.00 328.90" stroke="#7c7c7c" stroke-width="0.7" fill="none"/><ellipse cx="605.20" cy="331.50" rx="2.71" ry="0.84" fill="#ffffff" opacity="0.45"/></g></svg>
<div class="abs" style="left:627.85px;top:313.60px;width:32.20px;height:32.30px;background:radial-gradient(ellipse at 50% 35%,#f0f0f0 0%,#ececec 60%,#e7e7e7 100%);border-radius:7.2px;"></div>
<svg style="left:0;top:0" width="1024" height="541" viewBox="0 0 1024 541"><path d="M639.95 314 L643.95 318.6 L647.95 314 Z" fill="#dedede" opacity="0.7" filter="url(#bl)"/><g filter="url(#bl)"><path d="M630.75 328.80 Q643.95 329.80 657.15 328.80 Q651.87 336.12 643.95 334.80 Q636.03 336.12 630.75 328.80 Z" fill="url(#glo)"/><path d="M630.75 328.80 Q636.69 322.59 641.31 323.40 Q643.95 325.96 646.59 323.40 Q651.21 322.59 657.15 328.80 Q643.95 329.80 630.75 328.80 Z" fill="url(#gup)"/><path d="M631.25 328.80 Q643.95 329.80 656.65 328.80" stroke="#7c7c7c" stroke-width="0.7" fill="none"/><ellipse cx="643.95" cy="332.52" rx="2.90" ry="1.20" fill="#ffffff" opacity="0.45"/></g></svg>
<div class="abs" style="left:494.00px;top:434.00px;width:69.20px;height:25.30px;border:2.2px solid #e8192c;box-sizing:border-box;"></div>
<div class="abs" style="left:496.50px;top:436.20px;width:64.20px;height:20.40px;background:#0e72ed;border-radius:4px;"></div>
<span class="t" style="left:515.88px;top:438.70px;font-size:10.5px;line-height:15px;color:#ffffff;transform:scaleX(1.0831);font-weight:700;">完了</span>
<div class="abs" style="left:572.00px;top:435.00px;width:97.00px;height:21.60px;border:1px solid #5a5a5a;border-radius:6px;box-sizing:border-box;"></div>
<span class="t" style="left:578.59px;top:439.00px;font-size:10.2px;line-height:14px;color:#ececec;transform:scaleX(1.0174);">保存<span class="k h" style="width:24.45px"><span>せずに</span></span>終了<span class="k h" style="width:16.30px"><span>する</span></span></span>
</div>
</div>
<div class="layer" id="edge">
<div class="abs" style="left:0.00px;top:539.00px;width:1019.00px;height:1.00px;background:#2c2c2c;"></div>
<div class="abs" style="left:0.00px;top:540.00px;width:1019.00px;height:1.00px;background:#acacac;"></div>
<div class="abs" style="left:1018px;top:0;width:6px;height:541px;background:linear-gradient(90deg,#383838 0,#383838 0.6px,#fff 1.2px);"></div>
</div>
</body>
</html>
